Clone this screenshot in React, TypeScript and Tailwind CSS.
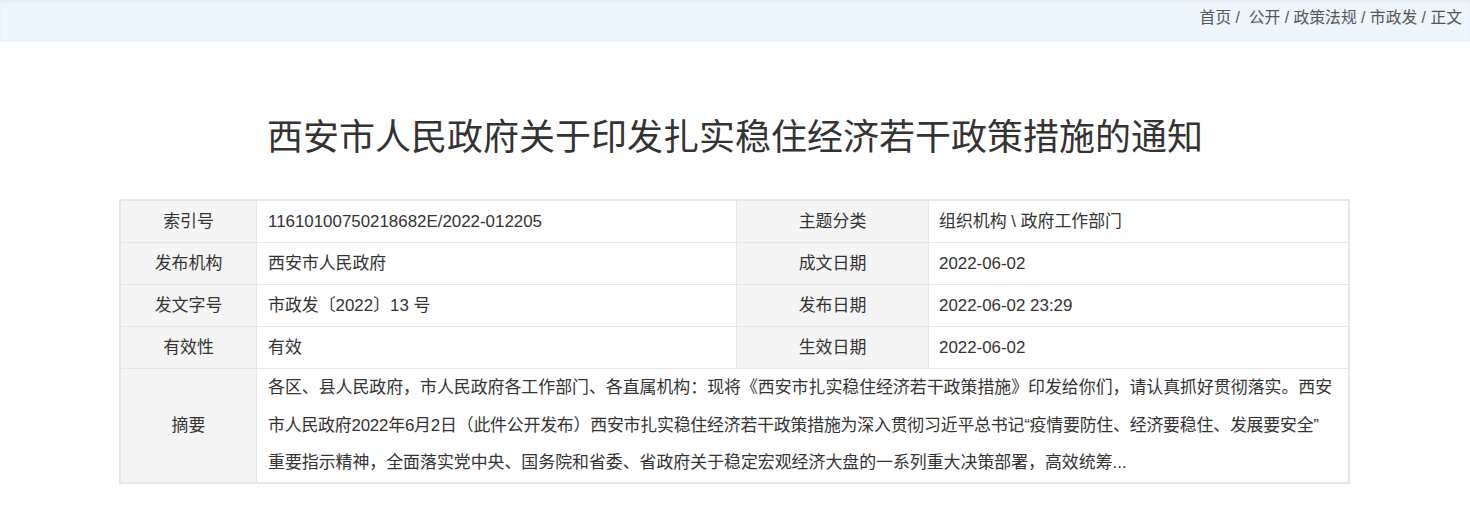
const font = "font-['Liberation_Sans','Noto_Sans_CJK_SC',sans-serif]";

const rows: [string, string, string, string][] = [
  ["索引号", "11610100750218682E/2022-012205", "主题分类", "组织机构 \\ 政府工作部门"],
  ["发布机构", "西安市人民政府", "成文日期", "2022-06-02"],
  ["发文字号", "市政发〔2022〕13 号", "发布日期", "2022-06-02 23:29"],
  ["有效性", "有效", "生效日期", "2022-06-02"],
];

// wrapped the way the original page wraps it
const summary = [
  "各区、县人民政府，市人民政府各工作部门、各直属机构：现将《西安市扎实稳住经济若干政策措施》印发给你们，请认真抓好贯彻落实。西安",
  "市人民政府2022年6月2日（此件公开发布）西安市扎实稳住经济若干政策措施为深入贯彻习近平总书记“疫情要防住、经济要稳住、发展要安全”",
  "重要指示精神，全面落实党中央、国务院和省委、省政府关于稳定宏观经济大盘的一系列重大决策部署，高效统筹...",
];

export default function App() {
  return (
    <div className={`min-h-screen bg-white text-[#333] ${font}`}>
      <div className="h-[42px] bg-[#edf5fd] shadow-[inset_0_2px_3px_rgba(0,0,0,0.04)] flex items-start justify-end pr-[8px]">
        <div className="text-[15.8px] leading-[20px] text-[#555] pt-[8px]">
          首页 /&nbsp; 公开 / 政策法规 / 市政发 / 正文
        </div>
      </div>

      <h1 className="text-center text-[36px] leading-[48px] text-[#333] font-normal mt-[72px] mb-[37px]">
        西安市人民政府关于印发扎实稳住经济若干政策措施的通知
      </h1>

      <div className="mx-[119px] w-[1231px] border border-[#e6e6e6] text-[16.9px]">
        <table className="w-full border-collapse table-fixed">
          <colgroup>
            <col className="w-[136px]" />
            <col className="w-[480px]" />
            <col className="w-[192px]" />
            <col />
          </colgroup>
          <tbody>
            {rows.map((r) => (
              <tr key={r[0]} className="h-[42px]">
                <td className="bg-[#f5f5f5] border border-[#e6e6e6] text-center">{r[0]}</td>
                <td className="border border-[#e6e6e6] pl-[11px]">{r[1]}</td>
                <td className="bg-[#f5f5f5] border border-[#e6e6e6] text-center">{r[2]}</td>
                <td className="border border-[#e6e6e6] pl-[10px]">{r[3]}</td>
              </tr>
            ))}
            <tr>
              <td className="bg-[#f5f5f5] border border-[#e6e6e6] text-center">摘要</td>
              <td colSpan={3} className="border border-[#e6e6e6] pl-[11px] pr-[4px] py-[0px] leading-[37.6px]">
                <div className="whitespace-nowrap">{summary[0]}</div>
                <div className="whitespace-nowrap tracking-[-0.2px]">{summary[1]}</div>
                <div className="whitespace-nowrap">{summary[2]}</div>
              </td>
            </tr>
          </tbody>
        </table>
      </div>
    </div>
  );
}
